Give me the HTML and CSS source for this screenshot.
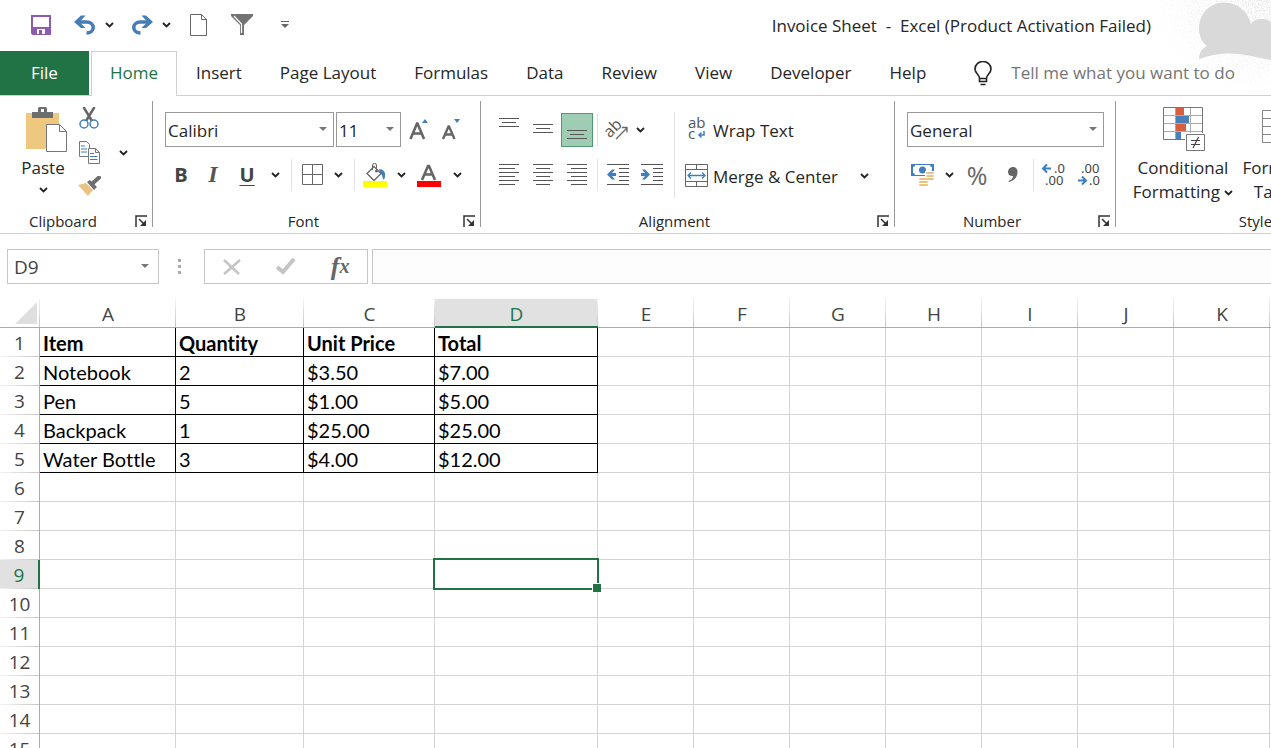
FILE: index.html
```html
<!DOCTYPE html>
<html lang="en">
<head>
  <meta charset="UTF-8">
  <meta name="viewport" content="width=device-width, initial-scale=1.0">
  <title>Invoice Sheet - Excel</title>
  <link rel="stylesheet" href="styles.css">
</head>
<body>
  <svg class="defs" width="0" height="0" aria-hidden="true">
    <symbol id="chevron" viewBox="0 0 9 6"><path d="M1 1l3.500 3.500L8 1" fill="none" stroke="#222" stroke-width="1.800"/></symbol>
    <symbol id="launcher" viewBox="0 0 12 12"><path d="M1 12V1h11M4 4l6 6" fill="none" stroke="#333" stroke-width="1.500"/><path d="M11 5v6H5z" fill="#333"/></symbol>
  </svg>

  <header class="top">
    <svg class="cloud" width="120" height="95" viewBox="0 0 120 95" aria-hidden="true">
      <defs>
        <filter id="speckle" x="0" y="0" width="100%" height="100%">
          <feTurbulence type="fractalNoise" baseFrequency="0.7" numOctaves="2" seed="4"/>
          <feColorMatrix values="0 0 0 0 0.8  0 0 0 0 0.8  0 0 0 0 0.8  4 0 0 0 -1.7"/>
        </filter>
        <radialGradient id="fade" cx="1" cy="0" r="1"><stop offset="0" stop-color="#fff"/><stop offset=".5" stop-color="#888"/><stop offset="1" stop-color="#000"/></radialGradient>
        <mask id="fademask"><rect width="120" height="95" fill="url(#fade)"/></mask>
      </defs>
      <g mask="url(#fademask)"><rect width="120" height="95" filter="url(#speckle)"/></g>
      <path d="M48 59c0-6 3-11 8-13C45 37 47 22 52 14C58 5 68 1 78 3c11 2 19 10 22 21c6-7 14-6 20-2v38c-22-4-42-12-72-1z" fill="#d9d9d9"/>
    </svg>

    <div class="title-bar">
      <div class="quick-access">
        <button class="qa save" aria-label="Save"><svg width="20" height="20" viewBox="0 0 20 20"><path d="M1 1h18v18H2l-1-1z" fill="#fff" stroke="#8c5bb0" stroke-width="2"/><path d="M2 12h16v7H2z" fill="#8c5bb0"/><path d="M6 14h8v5H6z" fill="#fff"/><path d="M8 15h3v4H8z" fill="#8c5bb0"/></svg></button>
        <button class="qa undo" aria-label="Undo"><svg width="22" height="20" viewBox="0 0 22 20"><path d="M3 7h9.500c9 0 9 11 0 11" fill="none" stroke="#457db7" stroke-width="3.500"/><path d="M0 7l7-6.500h4.500L5.500 7l6 6H7z" fill="#457db7"/></svg></button>
        <button class="qa drop" aria-label="Undo list"><svg width="9" height="6"><use href="#chevron"/></svg></button>
        <button class="qa redo" aria-label="Redo"><svg width="22" height="20" viewBox="0 0 22 20"><path d="M19 7H9.500c-9 0-9 11 0 11" fill="none" stroke="#457db7" stroke-width="3.500"/><path d="M22 7L15 .500h-4.500l6 6.500-6 6H15z" fill="#457db7"/></svg></button>
        <button class="qa drop" aria-label="Redo list"><svg width="9" height="6"><use href="#chevron"/></svg></button>
        <button class="qa new" aria-label="New"><svg width="18" height="22" viewBox="0 0 18 22"><path d="M.5.500h11l5 5v16H.5zM11.500.500v5h5" fill="#fff" stroke="#666"/></svg></button>
        <button class="qa filter" aria-label="Filter"><svg width="22" height="21" viewBox="0 0 22 21"><path d="M0 0h22v2l-9 9v10H9V11L0 2z" fill="#737373"/><path d="M3 2l7.500 8v9" fill="none" stroke="#fff" stroke-width="1.200"/></svg></button>
        <button class="qa more" aria-label="Customize Quick Access Toolbar"><svg width="8" height="7" viewBox="0 0 8 7"><path d="M0 0h8v1H0zM0 3h8L4 7z" fill="#666"/></svg></button>
      </div>
      <h1 class="title">Invoice Sheet&nbsp; -&nbsp; Excel (Product Activation Failed)</h1>
    </div>

    <nav class="tabs">
      <a class="tab file" href="#">File</a>
      <a class="tab active" href="#">Home</a>
      <a class="tab" href="#">Insert</a>
      <a class="tab" href="#">Page Layout</a>
      <a class="tab" href="#">Formulas</a>
      <a class="tab" href="#">Data</a>
      <a class="tab" href="#">Review</a>
      <a class="tab" href="#">View</a>
      <a class="tab" href="#">Developer</a>
      <a class="tab" href="#">Help</a>
      <label class="tell-me">
        <svg width="18" height="25" viewBox="0 0 18 25"><path d="M5.500 17.500c0-4-4.500-5-4.500-9.500a8 7.500 0 0 1 16 0c0 4.500-4.500 5.500-4.500 9.500zM5.500 17v3.500h7V17M6.500 23.500h5" fill="none" stroke="#222" stroke-width="1.600"/></svg>
        <input type="text" placeholder="Tell me what you want to do" aria-label="Tell me what you want to do">
      </label>
    </nav>
  </header>

  <div class="ribbon">
    <section class="group clipboard">
      <div class="group-body">
        <button class="big paste">
          <svg width="42" height="46" viewBox="0 0 42 46"><path d="M0 6h33v36H0z" fill="#edc87e"/><path d="M6 5h6V1.500Q12 0 13.500 0h6Q21 0 21 1.500V5h6v6H6z" fill="#6e6e6e"/><path d="M15 2h3v3h-3z" fill="#fff"/><path d="M20.500 17.500h13l7 7v20h-20z" fill="#fff" stroke="#777"/><path d="M33.500 17.500v7h7" fill="none" stroke="#777"/></svg>
          <span>Paste</span>
          <svg width="9" height="6"><use href="#chevron"/></svg>
        </button>
        <div class="small-buttons">
          <button aria-label="Cut"><svg width="20" height="22" viewBox="0 0 20 22"><path d="M4.500 0L13 14M15.500 0L7 14" stroke="#666" stroke-width="2.500"/><g fill="#fff" stroke="#3f7fbf" stroke-width="1.500"><circle cx="5" cy="17" r="4"/><circle cx="15" cy="17" r="4"/></g></svg></button>
          <button aria-label="Copy"><svg width="21" height="23" viewBox="0 0 21 23"><path d="M.5.500h7l3 3v12H.5z" fill="#fff" stroke="#777"/><path d="M2 5h4M2 8h6M2 11h6" stroke="#3f7fbf"/><path d="M9.500 7.500h7l4 4v11h-11z" fill="#fff" stroke="#777"/><path d="M16.500 7.500v4h4" fill="none" stroke="#777"/><path d="M11 12.500h4M11 15.500h7.500M11 18.500h7.500" stroke="#3f7fbf"/></svg></button>
          <button aria-label="Format Painter"><svg width="23" height="20" viewBox="0 0 23 20"><path d="M0 9l8-2 7 7-5 6z" fill="#edc381"/><path d="M9 6l3-2 7 7-3 3z" fill="#6e6e6e"/><path d="M15 7l6-5.500" stroke="#6e6e6e" stroke-width="4" stroke-linecap="round"/></svg></button>
        </div>
        <button class="drop copy-drop" aria-label="Copy options"><svg width="9" height="6"><use href="#chevron"/></svg></button>
      </div>
      <div class="group-footer"><span>Clipboard</span><button aria-label="Clipboard settings"><svg width="12" height="12"><use href="#launcher"/></svg></button></div>
    </section>

    <section class="group font">
      <div class="group-body">
        <div class="row">
          <div class="combo font-name"><select aria-label="Font"><option>Calibri</option></select></div>
          <div class="combo font-size"><select aria-label="Font size"><option>11</option></select></div>
          <button class="tool" aria-label="Increase Font Size"><svg width="20" height="22" viewBox="0 0 20 22"><path d="M1.500 20L8 4.500h.5L15 20M4 14.500h8.500" fill="none" stroke="#666" stroke-width="2.600"/><path d="M13 4l3-4 3 4z" fill="#3f7fbf"/></svg></button>
          <button class="tool" aria-label="Decrease Font Size"><svg width="20" height="22" viewBox="0 0 20 22"><path d="M2 20L7.500 7.500H8L13.500 20M4 15.500h7.500" fill="none" stroke="#666" stroke-width="2.400"/><path d="M13 0h6l-3 4z" fill="#3f7fbf"/></svg></button>
        </div>
        <div class="row">
          <button class="tool bold">B</button>
          <button class="tool italic">I</button>
          <button class="tool wide underline">U</button>
          <button class="drop" aria-label="Underline options"><svg width="9" height="6"><use href="#chevron"/></svg></button>
          <span class="divider"></span>
          <button class="tool" aria-label="Borders"><svg width="21" height="21" viewBox="0 0 21 21"><path d="M.5.500h20v20H.5zM10.500.500v20M.5 10.500h20" fill="none" stroke="#666"/></svg></button>
          <button class="drop" aria-label="Border options"><svg width="9" height="6"><use href="#chevron"/></svg></button>
          <span class="divider"></span>
          <button class="tool" aria-label="Fill Color"><svg width="24" height="24" viewBox="0 0 24 24"><path d="M16 6c5 0 8 4 5 11-2-2-1-5-4-7z" fill="#3f7fbf"/><path d="M11 3.500l7 7-7 7-7-7z" fill="#fff" stroke="#666" stroke-width="1.300"/><path d="M9.500 7V2q0-1.500 2-1.500t2 1.500v6" fill="none" stroke="#666"/><circle cx="13.500" cy="8" r="1.500" fill="#666"/><path d="M0 18h24v6H0z" fill="#ff0"/></svg></button>
          <button class="drop" aria-label="Fill options"><svg width="9" height="6"><use href="#chevron"/></svg></button>
          <button class="tool wide" aria-label="Font Color"><svg width="24" height="24" viewBox="0 0 24 24"><path d="M5 17l6-14h1l6 14M7.500 11.500h8" fill="none" stroke="#666" stroke-width="2.600"/><path d="M0 18h24v6H0z" fill="red"/></svg></button>
          <button class="drop" aria-label="Font color options"><svg width="9" height="6"><use href="#chevron"/></svg></button>
        </div>
      </div>
      <div class="group-footer"><span>Font</span><button aria-label="Font settings"><svg width="12" height="12"><use href="#launcher"/></svg></button></div>
    </section>

    <section class="group alignment">
      <div class="group-body">
        <div class="align-tools">
          <div class="row">
            <button class="tool" aria-label="Top Align"><svg width="20" height="24" viewBox="0 0 20 24"><path d="M0 .500h20M3 4.500h14M0 8.500h20" stroke="#555"/></svg></button>
            <button class="tool" aria-label="Middle Align"><svg width="20" height="24" viewBox="0 0 20 24"><path d="M0 6.500h20M3 10.500h14M0 14.500h20" stroke="#555"/></svg></button>
            <button class="tool pressed" aria-label="Bottom Align"><svg width="20" height="24" viewBox="0 0 20 24"><path d="M0 12.500h20M3 16.500h14M0 20.500h20" stroke="#555"/></svg></button>
            <span class="divider"></span>
            <button class="tool" aria-label="Orientation"><svg class="orient" width="22" height="22" viewBox="0 0 22 22"><text x="-2" y="14" transform="rotate(-45 7 11)">ab</text><path d="M9 20L20 9M15 8.500h5v5" fill="none" stroke="#666" stroke-width="1.300"/></svg></button>
            <button class="drop" aria-label="Orientation options"><svg width="9" height="6"><use href="#chevron"/></svg></button>
          </div>
          <div class="row">
            <button class="tool" aria-label="Align Left"><svg width="20" height="22" viewBox="0 0 20 22"><path d="M0 .500h20M0 4.500h16M0 8.500h20M0 12.500h16M0 16.500h20M0 20.500h16" stroke="#555"/></svg></button>
            <button class="tool" aria-label="Center"><svg width="20" height="22" viewBox="0 0 20 22"><path d="M0 .500h20M3 4.500h14M0 8.500h20M3 12.500h14M0 16.500h20M3 20.500h14" stroke="#555"/></svg></button>
            <button class="tool" aria-label="Align Right"><svg width="20" height="22" viewBox="0 0 20 22"><path d="M0 .500h20M4 4.500h16M0 8.500h20M4 12.500h16M0 16.500h20M4 20.500h16" stroke="#555"/></svg></button>
            <span class="divider"></span>
            <button class="tool" aria-label="Decrease Indent"><svg width="22" height="22" viewBox="0 0 22 22"><path d="M0 .500h22M12 4.500h10M12 8.500h10M12 12.500h10M12 16.500h10M0 20.500h22" stroke="#555"/><path d="M0 10.500l5-5h3l-3 3.500h4v3H5l3 3.500H5z" fill="#3f7fbf"/></svg></button>
            <button class="tool" aria-label="Increase Indent"><svg width="22" height="22" viewBox="0 0 22 22"><path d="M0 .500h22M12 4.500h10M12 8.500h10M12 12.500h10M12 16.500h10M0 20.500h22" stroke="#555"/><path d="M9 10.500l-5-5H1L4 9H0v3h4l-3 3.500h3z" fill="#3f7fbf"/></svg></button>
          </div>
        </div>
        <div class="cell-tools">
          <button class="labelled">
            <svg class="wrap-icon" width="24" height="24" viewBox="0 0 24 24"><text x="3" y="10">ab</text><text x="3" y="21">c</text><path d="M19 13v4h-5M16.500 14.500L14 17l2.500 2.500" fill="none" stroke="#3f7fbf" stroke-width="1.500"/></svg>
            Wrap Text
          </button>
          <button class="labelled">
            <svg width="24" height="24" viewBox="0 0 24 24"><path d="M.5.500h22v22H.5zM.5 5.500h22M.5 17.500h22M11.500.500v5M11.500 17.500v5" fill="#fff" stroke="#666"/><path d="M3 11.500h17M6 8.500l-3 3 3 3M17 8.500l3 3-3 3" fill="none" stroke="#3f7fbf" stroke-width="1.300"/></svg>
            Merge &amp; Center
            <svg class="push" width="9" height="6"><use href="#chevron"/></svg>
          </button>
        </div>
      </div>
      <div class="group-footer"><span>Alignment</span><button aria-label="Alignment settings"><svg width="12" height="12"><use href="#launcher"/></svg></button></div>
    </section>

    <section class="group number">
      <div class="group-body">
        <div class="row">
          <div class="combo"><select aria-label="Number format"><option>General</option></select></div>
        </div>
        <div class="row">
          <button class="tool" aria-label="Accounting Number Format"><svg width="24" height="24" viewBox="0 0 24 24"><path d="M0 1h23v12H0z" fill="#3f7fbf"/><path d="M2 4q2 0 2-2h15q0 2 2 2v6h-2v2H4q0-2-2-2z" fill="#fff"/><circle cx="11.500" cy="7" r="3.500" fill="#3f7fbf"/><path d="M14 8h9v10h-5v5H8v-8h6z" fill="#fff"/><g fill="#edc381"><rect x="15" y="9" width="8" height="2" rx="1"/><rect x="15" y="12" width="8" height="2" rx="1"/><rect x="15" y="15" width="8" height="2" rx="1"/><rect x="8" y="15" width="9" height="2" rx="1"/><rect x="8" y="18" width="9" height="2" rx="1"/><rect x="8" y="21" width="9" height="2" rx="1"/></g></svg></button>
          <button class="drop" aria-label="Accounting options"><svg width="9" height="6"><use href="#chevron"/></svg></button>
          <button class="tool wide percent">%</button>
          <button class="tool wide" aria-label="Comma Style"><svg width="10" height="16" viewBox="0 0 10 16"><path d="M5 0c3 0 4.500 2 4.500 5C9.500 11 5 14 1 15l-.5-1c3-1 4.500-3 4.500-5C2 9.500 0 7.500 0 5s2-5 5-5z" fill="#666"/></svg></button>
          <span class="divider"></span>
          <button class="tool wide" aria-label="Increase Decimal"><svg class="decimal" width="24" height="24" viewBox="0 0 24 24"><text x="12" y="10">.0</text><text x="3" y="22">.00</text><path d="M1 5.500h8M5 1.500l-4 4 4 4" fill="none" stroke="#3f7fbf" stroke-width="2"/></svg></button>
          <button class="tool wide" aria-label="Decrease Decimal"><svg class="decimal" width="24" height="24" viewBox="0 0 24 24"><text x="3" y="10">.00</text><text x="11" y="22">.0</text><path d="M0 17.500h8M4 13.500l4 4-4 4" fill="none" stroke="#3f7fbf" stroke-width="2"/></svg></button>
        </div>
      </div>
      <div class="group-footer"><span>Number</span><button aria-label="Number settings"><svg width="12" height="12"><use href="#launcher"/></svg></button></div>
    </section>

    <section class="group styles">
      <div class="group-body">
        <button class="big">
          <svg width="44" height="46" viewBox="0 0 44 46"><path d="M2.500 1.500h39v32h-39z" fill="#fff" stroke="#777"/><path d="M15 2h8v7h-8zM15 18h10v7H15z" fill="#d9603f"/><path d="M15 10h13v7H15zM15 26h5v7h-5z" fill="#4a7fb8"/><path d="M14.500 2v31M29.500 2v31M3 9.500h38M3 17.500h38M3 25.500h38" fill="none" stroke="#aaa"/><path d="M24 27h20v19H24z" fill="#fff"/><path d="M25.500 28.500h18v16h-18z" fill="#fff" stroke="#777"/><path d="M30 34.500h9M30 38.500h9M37.500 31l-5.500 11" stroke="#444" stroke-width="1.200"/></svg>
          <span>Conditional<br>Formatting <svg width="9" height="6"><use href="#chevron"/></svg></span>
        </button>
        <button class="big">
          <svg width="44" height="46" viewBox="0 0 44 46"><path d="M2.500 4.500h39v32h-39zM2.500 12.500h39M2.500 20.500h39M2.500 28.500h39M15.500 4.500v32M28.500 4.500v32" fill="#fff" stroke="#888"/></svg>
          <span>Format as<br>Table <svg width="9" height="6"><use href="#chevron"/></svg></span>
        </button>
      </div>
      <div class="group-footer"><span>Styles</span></div>
    </section>
  </div>

  <div class="formula-bar">
    <div class="combo name-box"><input type="text" value="D9" aria-label="Name box"></div>
    <svg class="grip" width="4" height="16" viewBox="0 0 4 16" aria-hidden="true"><path d="M0 0h3v3H0zM0 6h3v3H0zM0 12h3v3H0z" fill="#aaa"/></svg>
    <div class="formula-buttons">
      <button aria-label="Cancel"><svg width="18" height="16" viewBox="0 0 18 16"><path d="M1 1l15 14M17 1L1 15" stroke="#c4c4c4" stroke-width="2.500"/></svg></button>
      <button aria-label="Enter"><svg width="20" height="17" viewBox="0 0 20 17"><path d="M1 9l6 5L18 1" fill="none" stroke="#c4c4c4" stroke-width="4"/></svg></button>
      <button class="fx" aria-label="Insert Function">f<span>x</span></button>
    </div>
    <input class="formula" type="text" aria-label="Formula">
  </div>

  <main class="sheet">
    <table>
      <colgroup>
        <col class="c-head"><col class="c-a"><col class="c-b"><col class="c-c"><col class="c-d">
        <col><col><col><col><col><col><col><col>
      </colgroup>
      <thead>
        <tr><th class="corner"><svg width="22" height="22" viewBox="0 0 22 22"><path d="M22 0v22H0z" fill="#dfdfdf"/></svg></th><th>A</th><th>B</th><th>C</th><th class="current">D</th><th>E</th><th>F</th><th>G</th><th>H</th><th>I</th><th>J</th><th>K</th><th>L</th></tr>
      </thead>
      <tbody>
        <tr class="data bold-row"><th>1</th><td>Item</td><td>Quantity</td><td>Unit Price</td><td>Total</td><td></td><td></td><td></td><td></td><td></td><td></td><td></td><td></td></tr>
        <tr class="data"><th>2</th><td>Notebook</td><td>2</td><td>$3.50</td><td>$7.00</td><td></td><td></td><td></td><td></td><td></td><td></td><td></td><td></td></tr>
        <tr class="data"><th>3</th><td>Pen</td><td>5</td><td>$1.00</td><td>$5.00</td><td></td><td></td><td></td><td></td><td></td><td></td><td></td><td></td></tr>
        <tr class="data"><th>4</th><td>Backpack</td><td>1</td><td>$25.00</td><td>$25.00</td><td></td><td></td><td></td><td></td><td></td><td></td><td></td><td></td></tr>
        <tr class="data"><th>5</th><td>Water Bottle</td><td>3</td><td>$4.00</td><td>$12.00</td><td></td><td></td><td></td><td></td><td></td><td></td><td></td><td></td></tr>
        <tr><th>6</th><td></td><td></td><td></td><td></td><td></td><td></td><td></td><td></td><td></td><td></td><td></td><td></td></tr>
        <tr><th>7</th><td></td><td></td><td></td><td></td><td></td><td></td><td></td><td></td><td></td><td></td><td></td><td></td></tr>
        <tr><th>8</th><td></td><td></td><td></td><td></td><td></td><td></td><td></td><td></td><td></td><td></td><td></td><td></td></tr>
        <tr><th class="current">9</th><td></td><td></td><td></td><td class="selected"></td><td></td><td></td><td></td><td></td><td></td><td></td><td></td><td></td></tr>
        <tr><th>10</th><td></td><td></td><td></td><td></td><td></td><td></td><td></td><td></td><td></td><td></td><td></td><td></td></tr>
        <tr><th>11</th><td></td><td></td><td></td><td></td><td></td><td></td><td></td><td></td><td></td><td></td><td></td><td></td></tr>
        <tr><th>12</th><td></td><td></td><td></td><td></td><td></td><td></td><td></td><td></td><td></td><td></td><td></td><td></td></tr>
        <tr><th>13</th><td></td><td></td><td></td><td></td><td></td><td></td><td></td><td></td><td></td><td></td><td></td><td></td></tr>
        <tr><th>14</th><td></td><td></td><td></td><td></td><td></td><td></td><td></td><td></td><td></td><td></td><td></td><td></td></tr>
        <tr><th>15</th><td></td><td></td><td></td><td></td><td></td><td></td><td></td><td></td><td></td><td></td><td></td><td></td></tr>
      </tbody>
    </table>
  </main>
</body>
</html>
```
FILE: styles.css
```css
* {
  box-sizing: border-box;
}

body {
  margin: 0;
  height: 100vh;
  display: flex;
  flex-direction: column;
  overflow: hidden;
  font-family: "Open Sans", "Noto Sans", sans-serif;
  font-size: 17px;
  color: #262626;
  background: #fff;
}

button {
  display: flex;
  align-items: center;
  justify-content: center;
  padding: 0;
  border: 0;
  background: none;
  font: inherit;
  color: inherit;
}

input,
select {
  font: inherit;
  color: inherit;
  outline: none;
}

svg {
  flex: none;
}

.defs {
  position: absolute;
}

/* Title bar */
.top {
  position: relative;
  flex: none;
}

.cloud {
  position: absolute;
  top: 0;
  right: 0;
}

.title-bar {
  position: relative;
  display: flex;
  align-items: center;
  height: 51px;
  padding: 0 120px 0 31px;
}

.quick-access {
  display: flex;
  align-items: center;
  padding-bottom: 2px;
}

.save { margin-right: 23px; }
.undo, .redo { margin-right: 9px; }
.qa.drop { width: 9px; height: 22px; margin-right: 17px; }
.new { margin-left: 2px; margin-right: 23px; }
.filter { margin-right: 28px; }

.title {
  margin: 0 0 0 auto;
  font-size: 17px;
  font-weight: normal;
  white-space: nowrap;
}

/* Tabs */
.tabs {
  position: relative;
  display: flex;
  height: 45px;
  border-bottom: 1px solid #d0d0d0;
  white-space: nowrap;
}

.tab {
  padding: 0 19px;
  line-height: 44px;
  color: inherit;
  text-decoration: none;
}

.tab.file {
  padding: 0 31px;
  margin-right: 2px;
  background: #217346;
  color: #fff;
}

.tab.active {
  height: 45px;
  padding: 0 18px;
  border: 1px solid #d0d0d0;
  border-bottom: 0;
  background: #fff;
  color: #217346;
  line-height: 42px;
}

.tell-me {
  display: flex;
  flex: 1;
  align-items: center;
  gap: 19px;
  padding-left: 29px;
}

.tell-me input {
  flex: 1;
  min-width: 0;
  height: 44px;
  padding: 0 0 2px;
  border: 0;
  background: none;
}

.tell-me input::placeholder {
  color: #757575;
}

/* Ribbon */
.ribbon {
  display: flex;
  flex: none;
  padding-top: 5px;
  border-bottom: 1px solid #d0d0d0;
  overflow: hidden;
}

.group {
  display: flex;
  flex: none;
  flex-direction: column;
  padding-right: 1px;
  background: linear-gradient(#999, #999) right top / 1px calc(100% - 6px) no-repeat;
}

.group-body {
  height: 108px;
  padding: 11px 0 0 12px;
}

.group-footer {
  display: flex;
  align-items: center;
  height: 24px;
  padding-right: 5px;
  font-size: 15px;
}

.group-footer span {
  flex: 1;
  text-align: center;
}

.group-footer button {
  margin-left: 9px;
}

.row {
  display: flex;
  align-items: center;
  height: 35px;
}

.row + .row {
  margin-top: 10px;
}

.tool {
  width: 32px;
  height: 34px;
}

.tool.wide {
  width: 36px;
}

.drop {
  width: 20px;
  height: 34px;
}

.divider {
  width: 1px;
  height: 32px;
  margin: 0 4px 0 6px;
  background: #e1e1e1;
}

.combo {
  position: relative;
  height: 35px;
}

.combo select,
.combo input {
  width: 100%;
  height: 100%;
  padding: 1px 2px 0;
  appearance: none;
  border: 1px solid #999;
  border-radius: 0;
  background: #fff;
}

.combo::after {
  content: "";
  position: absolute;
  top: 15px;
  right: 7px;
  border: 4px solid transparent;
  border-top-color: #777;
  border-bottom: 0;
  pointer-events: none;
}

.big {
  flex-direction: column;
  justify-content: flex-start;
  line-height: 24px;
}

/* Clipboard */
.clipboard {
  width: 153px;
}

.clipboard .group-body {
  display: flex;
  padding: 6px 0 0 20px;
}

.paste {
  width: 46px;
}

.paste svg:first-child {
  margin-left: 7px;
}

.paste span {
  margin: 3px 0 7px;
}

.small-buttons {
  display: grid;
  grid-template-rows: repeat(3, 34px);
  align-content: start;
  margin-left: 11px;
  margin-top: -6px;
}

.small-buttons button {
  width: 24px;
}

.copy-drop {
  margin: 29px 0 0 12px;
}

/* Font */
.font {
  width: 328px;
}

.font-name { width: 169px; margin-right: 2px; }
.font-size { width: 65px; margin-right: 2px; }

.bold,
.underline {
  font-size: 20px;
  font-weight: bold;
  color: #444;
}

.underline {
  text-decoration: underline;
  text-decoration-thickness: 1px;
  text-underline-offset: 3px;
}

.italic {
  font-family: "Liberation Serif", serif;
  font-size: 24px;
  font-style: italic;
  font-weight: bold;
  color: #555;
}

/* Alignment */
.alignment {
  width: 414px;
}

.alignment .group-body {
  display: flex;
}

.align-tools {
  padding-right: 6px;
}

.align-tools .row {
  gap: 2px;
}

.align-tools .divider {
  margin: 0 2px;
}

.align-tools .drop {
  width: 9px;
}

.pressed {
  border: 1px solid #4f9a6f;
  background: #9fcdb3;
}

.orient {
  overflow: visible;
  font-size: 16px;
  fill: #555;
}

.cell-tools {
  flex: 1;
  height: 86px;
  padding-left: 10px;
  border-left: 1px solid #e1e1e1;
}

.labelled {
  justify-content: flex-start;
  gap: 4px;
  width: 184px;
  height: 36px;
}

.labelled + .labelled {
  margin-top: 10px;
}

.labelled .push {
  margin-left: auto;
}

.wrap-icon {
  overflow: visible;
  font-size: 15px;
  fill: #555;
}

/* Number */
.number {
  width: 221px;
}

.number .combo {
  width: 197px;
}

.number .divider {
  margin: 0 2px;
}

.percent {
  font-size: 25px;
  color: #666;
}

.decimal {
  overflow: visible;
  font-family: "Noto Sans", sans-serif;
  font-size: 13px;
  fill: #444;
}

/* Styles */
.styles {
  width: 292px;
}

.styles .group-body {
  display: flex;
  padding: 5px 0 0 12px;
}

.styles .big {
  width: 110px;
  white-space: nowrap;
}

.styles .big span {
  margin-top: 4px;
}

.styles .big span svg {
  vertical-align: middle;
}

.styles .big + .big {
  width: 84px;
  margin-left: 2px;
}

/* Formula bar */
.formula-bar {
  display: flex;
  flex: none;
  align-items: center;
  height: 35px;
  margin: 15px 0;
  padding-left: 7px;
}

.formula-bar .name-box {
  width: 152px;
}

.formula-bar .name-box input {
  padding: 0 6px;
  border-color: #c6c6c6;
  font-size: 19px;
  color: #444;
}

.name-box::after {
  right: 10px;
}

.grip {
  margin: 0 22px 0 19px;
}

.formula-buttons {
  display: flex;
  align-items: center;
  justify-content: space-around;
  width: 164px;
  height: 35px;
  margin-right: 4px;
  border: 1px solid #c6c6c6;
}

.fx {
  font: italic bold 26px "Liberation Serif", serif;
  color: #666;
}

.fx span {
  font-size: 20px;
}

.formula {
  flex: 1;
  min-width: 0;
  height: 35px;
  border: 1px solid #c6c6c6;
  border-right: 0;
  background: #fdfdfd;
}

/* Sheet */
.sheet {
  flex: 1;
  min-height: 0;
  overflow: hidden;
}

table {
  table-layout: fixed;
  width: 1366px;
  border-spacing: 0;
}

.c-head { width: 40px; }
.c-a { width: 136px; }
.c-b { width: 128px; }
.c-c { width: 131px; }
.c-d { width: 163px; }

th,
td {
  height: 29px;
  padding: 0;
  line-height: 28px;
  border-right: 1px solid #d4d4d4;
  border-bottom: 1px solid #d4d4d4;
  white-space: nowrap;
}

th {
  font-size: 19px;
  font-weight: normal;
  color: #444;
}

thead th {
  padding-top: 2px;
  line-height: 26px;
  border-right: 0;
  border-bottom-color: #ababab;
  background: linear-gradient(#f4f4f4, #c6c6c6) right top / 1px 100% no-repeat;
}

tbody th {
  border-right-color: #ababab;
  border-bottom: 0;
  background: linear-gradient(to right, #f4f4f4, #c6c6c6) left bottom / 100% 1px no-repeat;
}

thead .current {
  padding-top: 3px;
  border-bottom: 2px solid #217346;
  background-color: #e1e1e1;
  color: #217346;
  line-height: 24px;
}

tbody .current {
  border-right: 2px solid #217346;
  background-color: #e1e1e1;
  color: #217346;
}

thead .corner {
  padding-top: 0;
}

.corner svg {
  display: block;
  margin: 3px 0 3px 15px;
}

td {
  padding: 2px 0 0 3px;
  font-family: Lato, sans-serif;
  font-size: 20px;
  font-variant-ligatures: none;
  line-height: 26px;
  color: #000;
}

.data td:nth-child(-n+5) {
  border-color: #000;
}

.bold-row td {
  font-weight: bold;
}

.selected {
  position: relative;
}

.selected::before {
  content: "";
  position: absolute;
  inset: -2px;
  border: 2px solid #217346;
}

.selected::after {
  content: "";
  position: absolute;
  right: -4px;
  bottom: -4px;
  width: 8px;
  height: 8px;
  border: 1px solid #fff;
  border-right: 0;
  border-bottom: 0;
  background: #217346;
}
```
